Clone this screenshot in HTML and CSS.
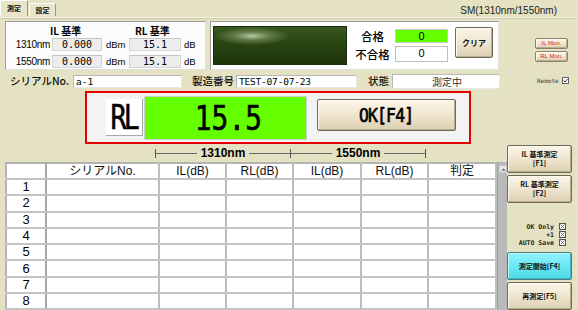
FILE: index.html
```html
<!DOCTYPE html>
<html lang="ja">
<head>
<meta charset="utf-8">
<title>測定</title>
<link rel="stylesheet" href="styles.css">
</head>
<body>
<div class="app">
  <header class="topbar">
    <nav class="tabs">
      <span class="tab tab-active">測定</span>
      <span class="tab">設定</span>
    </nav>
    <span class="mode">SM(1310nm/1550nm)</span>
  </header>
  <div class="main">
    <div class="leftcol">
      <div class="row1">
        <section class="refpanel">
          <div class="ref-row ref-head">
            <span class="ref-h1">IL 基準</span>
            <span class="ref-h2">RL 基準</span>
          </div>
          <div class="ref-row">
            <span class="ref-label">1310nm</span>
            <span class="valbox v1">0.000</span>
            <span class="unit">dBm</span>
            <span class="valbox v2">15.1</span>
            <span class="unit">dB</span>
          </div>
          <div class="ref-row ref-row2">
            <span class="ref-label">1550nm</span>
            <span class="valbox v1">0.000</span>
            <span class="unit">dBm</span>
            <span class="valbox v2">15.1</span>
            <span class="unit">dB</span>
          </div>
        </section>
        <section class="statpanel">
          <div class="display"></div>
          <div class="counts">
            <div class="count-row"><span class="count-label">合格</span><span class="count-box pass">0</span></div>
            <div class="count-row count-row2"><span class="count-label">不合格</span><span class="count-box">0</span></div>
          </div>
          <button class="btn btn-clear">クリア</button>
        </section>
      </div>
      <div class="row2">
        <span class="f-label f-serial">シリアルNo.</span>
        <span class="field field-serial">a-1</span>
        <span class="f-label f-mfg">製造番号</span>
        <span class="field field-mfg">TEST-07-07-23</span>
        <span class="f-label f-state">状態</span>
        <span class="field field-state">測定中</span>
      </div>
      <div class="measure">
        <div class="m-label"><span class="m-text">RL</span></div>
        <div class="m-value"><span class="m-num">15.5</span></div>
        <button class="btn btn-ok"><span class="ok-text">OK[F4]</span></button>
      </div>
      <div class="nmhead">
        <div class="nmseg"><span class="nmline"></span><span class="nmtext">1310nm</span><span class="nmline"></span></div>
        <div class="nmseg nmseg2"><span class="nmline"></span><span class="nmtext">1550nm</span><span class="nmline"></span></div>
      </div>
      <div class="tablewrap">
        <table class="grid">
          <colgroup>
            <col class="c-no"><col class="c-serial"><col class="c-val"><col class="c-val"><col class="c-val2"><col class="c-val"><col class="c-judge">
          </colgroup>
          <thead>
            <tr><th></th><th>シリアルNo.</th><th>IL(dB)</th><th>RL(dB)</th><th>IL(dB)</th><th>RL(dB)</th><th>判定</th></tr>
          </thead>
          <tbody>
            <tr><td class="no">1</td><td></td><td></td><td></td><td></td><td></td><td></td></tr>
            <tr><td class="no">2</td><td></td><td></td><td></td><td></td><td></td><td></td></tr>
            <tr><td class="no">3</td><td></td><td></td><td></td><td></td><td></td><td></td></tr>
            <tr><td class="no">4</td><td></td><td></td><td></td><td></td><td></td><td></td></tr>
            <tr><td class="no">5</td><td></td><td></td><td></td><td></td><td></td><td></td></tr>
            <tr><td class="no">6</td><td></td><td></td><td></td><td></td><td></td><td></td></tr>
            <tr><td class="no">7</td><td></td><td></td><td></td><td></td><td></td><td></td></tr>
            <tr><td class="no">8</td><td></td><td></td><td></td><td></td><td></td><td></td></tr>
          </tbody>
        </table>
        <div class="scrollbar">
          <div class="sb-arrow"><svg width="5" height="3" viewBox="0 0 5 3"><path d="M0 3 L2.5 0 L5 3 Z" fill="#888"/></svg></div>
        </div>
      </div>
    </div>
    <aside class="rightcol">
      <button class="btn btn-mon">IL Mon.</button>
      <button class="btn btn-mon btn-mon2">RL Mon.</button>
      <div class="remote">Remote
        <svg class="chk" width="7" height="7" viewBox="0 0 7 7"><rect x="0.5" y="0.5" width="6" height="6" fill="#fff" stroke="#666"/><path d="M1.5 3.5 L3 5 L5.5 2" fill="none" stroke="#333" stroke-width="1"/></svg>
      </div>
      <button class="btn btn-side btn-il">IL 基準測定<br>[F1]</button>
      <button class="btn btn-side btn-rl">RL 基準測定<br>[F2]</button>
      <div class="opts">
        <div class="opt">OK Only<svg class="xbox" width="7" height="7" viewBox="0 0 7 7"><rect x="0.5" y="0.5" width="6" height="6" fill="#fff" stroke="#555"/><path d="M1.5 1.5 L5.5 5.5 M5.5 1.5 L1.5 5.5" stroke="#555" stroke-width="0.8"/></svg></div>
        <div class="opt">+1<svg class="xbox" width="7" height="7" viewBox="0 0 7 7"><rect x="0.5" y="0.5" width="6" height="6" fill="#fff" stroke="#555"/><path d="M1.5 1.5 L5.5 5.5 M5.5 1.5 L1.5 5.5" stroke="#555" stroke-width="0.8"/></svg></div>
        <div class="opt">AUTO Save<svg class="xbox" width="7" height="7" viewBox="0 0 7 7"><rect x="0.5" y="0.5" width="6" height="6" fill="#fff" stroke="#555"/><path d="M1.5 1.5 L5.5 5.5 M5.5 1.5 L1.5 5.5" stroke="#555" stroke-width="0.8"/></svg></div>
      </div>
      <button class="btn btn-side btn-start">測定開始[F4]</button>
      <button class="btn btn-side btn-re">再測定[F5]</button>
    </aside>
  </div>
</div>
</body>
</html>
```

FILE: styles.css
```css
* { box-sizing: border-box; }
html, body { margin: 0; padding: 0; }
body {
  background: #e5e2c3;
  font-family: "Noto Sans CJK JP", "Liberation Sans", sans-serif;
  color: #000;
}
.app {
  width: 578px;
  height: 310px;
  overflow: hidden;
  background: #e5e2c3;
}

/* top bar */
.topbar {
  height: 18px;
  display: flex;
  justify-content: space-between;
  align-items: flex-start;
  border-bottom: 1px solid #f7f5e8;
  box-shadow: 0 1px 0 #cfcba8;
}
.tabs { display: flex; align-items: flex-end; height: 16px; }
.tab {
  display: flex;
  align-items: center;
  justify-content: center;
  font-size: 7px;
  font-weight: 700;
  line-height: 1;
  color: #111;
  border: 1px solid #9a9680;
  border-bottom: none;
  border-radius: 2px 2px 0 0;
  background: #e8e5c8;
}
.tab-active { width: 28px; height: 16px; border-left-color: #fff; border-top-color: #fff; }
.tab:not(.tab-active) { width: 27px; height: 13px; margin-left: 1px; border-left-color: #fff; border-top-color: #fff; }
.mode {
  font-family: "Liberation Sans", sans-serif;
  font-size: 10px;
  color: #222;
  margin: 5px 21px 0 0;
}

.main { display: flex; }
.leftcol { width: 505px; flex: none; }

/* row 1 */
.row1 {
  display: flex;
  gap: 4px;
  margin-top: 3px;
  padding-left: 5px;
  height: 49px;
}
.refpanel {
  width: 201px;
  background: #fcfcfc;
  border: 1px solid #9c9c9c;
  border-right-color: #e0e0e0;
  border-bottom-color: #e0e0e0;
}
.ref-row { display: flex; align-items: center; height: 13px; margin-top: 0; }
.ref-head { height: 16px; font-weight: 700; font-size: 10px; }
.ref-row2 { margin-top: 4px; }
.ref-h1 { margin-left: 44px; width: 85px; }
.ref-label {
  width: 46px;
  text-align: right;
  padding-right: 2px;
  font-family: "Liberation Sans", sans-serif;
  font-size: 10px;
  letter-spacing: -0.3px;
}
.valbox {
  height: 13px;
  background: #ededed;
  border: 1px solid #d4d4d4;
  border-top-color: #c4c4c4;
  font-family: "DejaVu Sans Mono", monospace;
  font-size: 10px;
  line-height: 11px;
  text-align: center;
}
.v1 { width: 50px; }
.v2 { width: 52px; }
.unit {
  font-family: "Liberation Sans", sans-serif;
  font-size: 9.5px;
  padding-left: 4px;
  width: 27px;
}
.unit:last-child { width: auto; padding-left: 3px; }

.statpanel {
  width: 289px;
  background: #fff;
  border: 1px solid #9c9c9c;
  border-right-color: #e0e0e0;
  border-bottom-color: #e0e0e0;
  display: flex;
  align-items: flex-start;
  padding: 4px 0 0 2px;
}
.display {
  width: 134px;
  height: 39px;
  border: 1px solid #1c2a0c;
  background:
    radial-gradient(ellipse 38px 9px at 38px 9px, rgba(220,230,200,0.8) 0%, rgba(160,180,130,0.45) 45%, rgba(80,110,50,0) 100%),
    linear-gradient(180deg, #38561e 0%, #294512 45%, #1d3509 100%);
}
.counts { margin-left: 3px; margin-top: 3px; }
.count-row { display: flex; align-items: center; height: 14px; }
.count-row2 { margin-top: 3px; height: 16px; }
.count-label {
  width: 45px;
  text-align: center;
  font-size: 11.5px;
  font-weight: 500;
}
.count-box {
  width: 53px;
  height: 100%;
  border: 1px solid #bdbdbd;
  background: #fff;
  font-family: "Liberation Sans", sans-serif;
  font-size: 11px;
  line-height: 13px;
  text-align: center;
}
.count-box.pass { background: #66ff00; border-color: #c8c8c8; }

.btn {
  font-family: "Noto Sans CJK JP", sans-serif;
  background: linear-gradient(180deg, #fbf6ea 0%, #efe5cf 50%, #dcd0b2 100%);
  border: 1px solid #6f6858;
  border-radius: 2px;
  box-shadow: inset -1px -1px 0 #b9ad90, inset 1px 1px 0 #fffaf0;
  padding: 0;
  color: #111;
  cursor: default;
}
.btn-clear {
  width: 38px;
  height: 31px;
  margin: 1px 0 0 7px;
  font-size: 8px;
  font-weight: 700;
}

/* row 2 */
.row2 {
  display: flex;
  align-items: center;
  margin-top: 4px;
  height: 15px;
}
.f-label { font-size: 10.5px; font-weight: 500; line-height: 1; white-space: nowrap; color: #111; }
.f-serial { margin-left: 10px; width: 63px; }
.f-mfg { margin-left: 10px; width: 44px; }
.f-state { margin-left: 11px; width: 24px; }
.field {
  background: #fff;
  border: 1px solid #b8b8b8;
  border-right-color: #e8e8e8;
  border-bottom-color: #e8e8e8;
  font-family: "DejaVu Sans Mono", monospace;
  font-size: 9.5px;
  line-height: 11px;
  padding-left: 2px;
  white-space: nowrap;
  overflow: hidden;
}
.field-serial { width: 109px; height: 13px; }
.field-mfg { width: 121px; height: 13px; letter-spacing: -0.2px; }
.field-state {
  width: 108px;
  height: 15px;
  text-align: center;
  font-family: "Noto Sans CJK JP", sans-serif;
  font-size: 10px;
  line-height: 13px;
  color: #333;
}

/* measure box */
.measure {
  margin: 2px 0 0 85px;
  width: 386px;
  height: 53px;
  border: 2px solid #e60000;
  background: #f3f3f3;
  display: flex;
  align-items: center;
}
.m-label {
  margin-left: 19px;
  width: 37px;
  height: 37px;
  background: #fff;
  border-right: 1px solid #a8a8a8;
  border-bottom: 1px solid #a8a8a8;
  display: flex;
  align-items: center;
  justify-content: center;
}
.m-text, .m-num, .ok-text {
  display: inline-block;
  font-family: "DejaVu Sans Mono", monospace;
  color: #000;
  line-height: 1;
  -webkit-text-stroke: 0.6px #000;
}
.m-text { font-size: 33px; transform: scaleX(0.8); letter-spacing: -3px; }
.m-value {
  width: 163px;
  height: 44px;
  margin-left: 1px;
  background: #66ff00;
  border: 1px solid #d0d0d0;
  display: flex;
  align-items: center;
  justify-content: center;
}
.m-num { font-size: 34px; transform: scaleX(0.82); padding-left: 6px; }
.btn-ok {
  margin-left: 10px;
  width: 139px;
  height: 32px;
  margin-top: -6px;
  display: flex;
  align-items: center;
  justify-content: center;
}
.ok-text { font-size: 20px; transform: scaleX(0.82); letter-spacing: -1px; -webkit-text-stroke: 0.7px #000; }

/* nm header */
.nmhead {
  display: flex;
  align-items: center;
  margin: 2px 0 0 155px;
  width: 271px;
  height: 14px;
}
.nmseg {
  flex: 1;
  height: 9px;
  display: flex;
  align-items: center;
  border-left: 1px solid #555;
}
.nmseg2 { border-right: 1px solid #555; }
.nmline { flex: 1; height: 1px; background: #666; }
.nmtext {
  font-family: "Liberation Sans", sans-serif;
  font-weight: 700;
  font-size: 12px;
  padding: 0 4px;
  line-height: 1;
}

/* table */
.tablewrap {
  display: flex;
  margin: 2px 0 0 5px;
  height: 160px;
}
.grid {
  width: 490px;
  border-collapse: collapse;
  table-layout: fixed;
  background: #fff;
  border-top: 2px solid #b4b4b4;
  border-left: 2px solid #b4b4b4;
  align-self: flex-start;
}
.c-no { width: 40px; }
.c-serial { width: 113px; }
.c-val { width: 67px; }
.c-val2 { width: 68px; }
.c-judge { width: 68px; }
.grid th, .grid td {
  border-right: 2px solid #bcbcbc;
  border-bottom: 2px solid #c4c4c4;
  padding: 0;
  text-align: center;
  font-weight: 400;
}
.grid th {
  height: 16px;
  font-family: "Liberation Sans", "Noto Sans CJK JP", sans-serif;
  font-size: 12px;
  line-height: 12px;
  color: #111;
}
.grid th:first-child, .grid td.no { border-right-color: #a8a8a8; }
.grid tbody tr { height: 16.3px; }
.grid td {
  font-family: "Liberation Sans", sans-serif;
  font-size: 13px;
  line-height: 12px;
}
.scrollbar {
  width: 10px;
  height: 160px;
  background: #b9b9b9;
  border-left: 1px solid #a0a0a0;
}
.sb-arrow {
  width: 8px;
  height: 8px;
  margin: 3px 0 0 1px;
  background: #e8e8e8;
  border: 1px solid #c8c8c8;
  display: flex;
  align-items: center;
  justify-content: center;
}

/* right column */
.rightcol {
  flex: 1;
  display: flex;
  flex-direction: column;
  padding-left: 2px;
}
.btn-mon {
  margin: 20px 0 0 28px;
  width: 33px;
  height: 11px;
  font-family: "Liberation Sans", sans-serif;
  font-size: 6px;
  line-height: 9px;
  color: #e02020;
  border-color: #8a8070;
}
.btn-mon2 { margin-top: 2px; }
.remote {
  margin: 14px 0 0 30px;
  display: flex;
  align-items: center;
  gap: 3px;
  font-family: "DejaVu Sans Mono", monospace;
  font-size: 6px;
  color: #333;
  height: 8px;
}
.chk { flex: none; }
.btn-side {
  width: 65px;
  height: 28px;
  font-size: 7px;
  font-weight: 700;
  line-height: 9px;
  text-align: center;
}
.btn-il { margin-top: 61px; }
.btn-rl { margin-top: 2px; }
.opts {
  margin-top: 20px;
  width: 59px;
  display: flex;
  flex-direction: column;
  align-items: flex-end;
  gap: 1px;
}
.opt {
  display: flex;
  align-items: center;
  gap: 5px;
  height: 7px;
  font-family: "DejaVu Sans Mono", monospace;
  font-weight: 700;
  font-size: 6.5px;
  color: #222;
}
.xbox { flex: none; }
.btn-start {
  margin-top: 6px;
  background: linear-gradient(180deg, #8ff4fb 0%, #6ae8f4 50%, #4fd9e8 100%);
  border-color: #4a7a80;
  box-shadow: inset -1px -1px 0 #3cb8c8, inset 1px 1px 0 #b8fbff;
}
.btn-re { margin-top: 2px; }
```
